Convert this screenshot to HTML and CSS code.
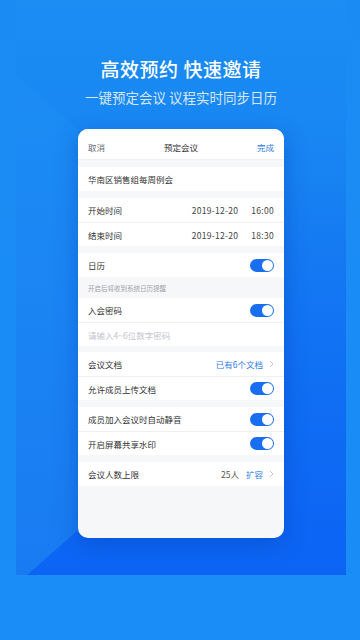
FILE: index.html
```html
<!DOCTYPE html>
<html lang="zh-CN">
<head>
<meta charset="utf-8">
<meta name="viewport" content="width=360">
<title>预定会议</title>
<link rel="stylesheet" href="styles.css">
</head>
<body>
<div class="page">
  <div class="stage">
    <h1 class="title">高效预约 快速邀请</h1>
    <p class="subtitle">一键预定会议 议程实时同步日历</p>
    <div class="card">
      <div class="nav">
        <span class="nav-cancel">取消</span>
        <span class="nav-title">预定会议</span>
        <span class="nav-done">完成</span>
      </div>

      <div class="group">
        <div class="row">华南区销售组每周例会</div>
      </div>

      <div class="group">
        <div class="row"><span>开始时间</span><span class="when"><span>2019-12-20</span><span>16:00</span></span></div>
        <div class="row"><span>结束时间</span><span class="when"><span>2019-12-20</span><span>18:30</span></span></div>
      </div>

      <div class="group">
        <div class="row"><span>日历</span><span class="toggle"></span></div>
      </div>
      <div class="note">开启后将收到系统日历提醒</div>
      <div class="group group-tight">
        <div class="row"><span>入会密码</span><span class="toggle"></span></div>
        <div class="row"><span class="placeholder">请输入4~6位数字密码</span></div>
      </div>

      <div class="group group-short">
        <div class="row"><span>会议文档</span><span class="link">已有6个文档<svg class="chev" viewBox="0 0 5 8" width="5" height="8"><polyline points="1,1 4,4 1,7" fill="none" stroke="#c4c8cf" stroke-width="1"/></svg></span></div>
        <div class="row"><span>允许成员上传文档</span><span class="toggle"></span></div>
      </div>

      <div class="group">
        <div class="row"><span>成员加入会议时自动静音</span><span class="toggle"></span></div>
        <div class="row"><span>开启屏幕共享水印</span><span class="toggle"></span></div>
      </div>

      <div class="group">
        <div class="row"><span>会议人数上限</span><span class="link"><span class="count">25人</span><span class="expand">扩容</span><svg class="chev" viewBox="0 0 5 8" width="5" height="8"><polyline points="1,1 4,4 1,7" fill="none" stroke="#c4c8cf" stroke-width="1"/></svg></span></div>
      </div>
    </div>
  </div>
</div>
</body>
</html>
```

FILE: styles.css
```css
* { box-sizing: border-box; }

html, body {
  margin: 0;
  padding: 0;
}

body {
  width: 360px;
  height: 640px;
  overflow: hidden;
  background: #1a8ef7;
  font-family: "Noto Sans CJK SC", "Noto Sans", sans-serif;
}

.page {
  height: 640px;
  padding: 0 14px 0 16px;
  background: linear-gradient(180deg, #1a8bf3 0%, #1a8df6 100%);
}

.stage {
  position: relative;
  width: 330px;
  height: 575px;
  display: flex;
  flex-direction: column;
  align-items: center;
  padding-top: 57px;
  background: linear-gradient(180deg, #1b8df3 0%, #1885f2 30%, #1376f3 60%, #0c64f4 100%);
  overflow: hidden;
}

.stage::before {
  content: "";
  position: absolute;
  left: 0;
  top: 0;
  width: 70px;
  height: 575px;
  background: linear-gradient(180deg, #1c8ff4 0%, #1a83f3 60%, #197bf2 100%);
  clip-path: polygon(0 75px, 62px 130px, 62px 530px, 11px 575px, 0 575px);
}

.stage::after {
  content: "";
  position: absolute;
  right: 0;
  top: 110px;
  width: 62px;
  height: 465px;
  background: linear-gradient(180deg, rgba(22, 130, 240, 0.0) 0%, rgba(12, 100, 244, 0.5) 100%);
}

.title {
  position: relative;
  z-index: 1;
  margin: 0;
  font-size: 19px;
  line-height: 24px;
  font-weight: 500;
  color: #ffffff;
  letter-spacing: 0.5px;
}

.subtitle {
  position: relative;
  z-index: 1;
  margin: 7px 0 0;
  font-size: 13.5px;
  line-height: 18px;
  font-weight: 400;
  color: rgba(255, 255, 255, 0.82);
}

.card {
  position: relative;
  z-index: 1;
  margin-top: 23px;
  width: 206px;
  height: 409px;
  border-radius: 10px;
  background: #f6f7f9;
  overflow: hidden;
  box-shadow: 0 6px 22px rgba(0, 50, 160, 0.35);
  font-size: 8.5px;
  color: #333333;
}

.nav {
  height: 31px;
  padding: 5px 10px 0;
  display: flex;
  align-items: center;
  justify-content: space-between;
  background: #ffffff;
  border-bottom: 1px solid #f0f1f4;
}

.nav-cancel { color: #666a70; }
.nav-title { color: #333333; }
.nav-done { color: #2e7ee6; }

.group {
  margin-top: 7px;
  background: #ffffff;
}

.group-tight { margin-top: 0; }
.group-short { margin-top: 6px; }

.row {
  height: 24px;
  padding: 0 10px;
  display: flex;
  align-items: center;
  justify-content: space-between;
  white-space: nowrap;
}

.row + .row {
  border-top: 1px solid #eff0f3;
}

.when {
  display: flex;
  gap: 13px;
  color: #444444;
  letter-spacing: 0.3px;
}

.note {
  height: 21px;
  padding: 0 10px;
  display: flex;
  align-items: center;
  font-size: 6.5px;
  color: #9ea3ab;
}

.placeholder {
  color: #c3c6cc;
}

.toggle {
  position: relative;
  width: 24px;
  height: 13px;
  border-radius: 7px;
  background: #1a6ff0;
}

.toggle::after {
  content: "";
  position: absolute;
  right: 1px;
  top: 1px;
  width: 11px;
  height: 11px;
  border-radius: 50%;
  background: #ffffff;
}

.link {
  display: flex;
  align-items: center;
  color: #2e7ee6;
}

.count {
  color: #555555;
  margin-right: 7px;
}

.chev {
  margin-left: 6px;
  display: block;
}
```
